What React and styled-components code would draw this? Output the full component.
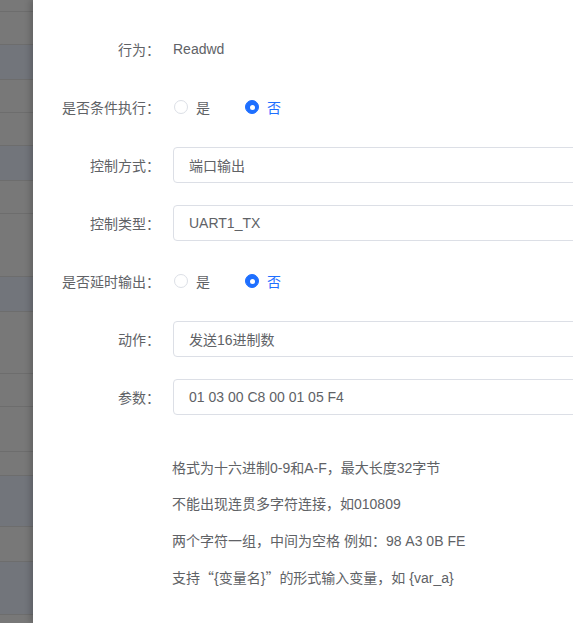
import React from 'react';
import styled, { createGlobalStyle } from 'styled-components';

const GlobalStyle = createGlobalStyle`
    html, body {
        margin: 0;
        padding: 0;
        height: 100%;
        overflow: hidden;
    }
    body {
        font-family: "Liberation Sans", "Noto Sans CJK SC", sans-serif;
        font-size: 14px;
        color: #606266;
    }
`;

const Page = styled.div`
    display: flex;
    height: 100vh;
    overflow: hidden;
`;

const Backdrop = styled.div`
    width: 33px;
    flex-shrink: 0;
    display: flex;
    flex-direction: column;
    background: #7c7c7c;
`;

const BackRow = styled.div`
    height: ${p => p.$h}px;
    box-sizing: border-box;
    flex-shrink: 0;
    background: ${p => (p.$tint ? '#72757b' : '#787878')};
    border-bottom: 1px solid #6d6d6d;
`;

const Drawer = styled.div`
    flex: 1;
    min-width: 0;
    background: #fff;
    box-shadow: -3px 0 6px rgba(0, 0, 0, 0.18);
    padding: 31px 0 0 20px;
    overflow: hidden;
    position: relative;
    z-index: 1;
`;

const Form = styled.div`
    display: flex;
    flex-direction: column;
    gap: 22px;
`;

const Item = styled.div`
    display: flex;
    align-items: center;
    height: 36px;
`;

const Label = styled.label`
    width: 120px;
    flex-shrink: 0;
    box-sizing: border-box;
    padding-right: 13px;
    text-align: right;
    color: #606266;
    font-size: 14px;
`;

const Value = styled.span`
    color: #606266;
`;

const Input = styled.div`
    width: 470px;
    flex-shrink: 0;
    height: 36px;
    box-sizing: border-box;
    border: 1px solid #dcdfe6;
    border-radius: 4px;
    padding: 0 15px;
    display: flex;
    align-items: center;
    color: #606266;
`;

const RadioGroup = styled.div`
    display: flex;
    align-items: center;
`;

const Radio = styled.label`
    display: flex;
    align-items: center;
    margin-right: 34px;
    color: ${p => (p.$checked ? '#1e6fff' : '#606266')};
`;

const Dot = styled.span`
    width: 14px;
    height: 14px;
    box-sizing: border-box;
    border-radius: 50%;
    margin-right: 8px;
    margin-left: 1px;
    border: 1px solid ${p => (p.$checked ? '#1e6fff' : '#dcdfe6')};
    background: ${p => (p.$checked ? '#1e6fff' : '#fff')};
    display: flex;
    align-items: center;
    justify-content: center;
    &::after {
        content: '';
        width: 5px;
        height: 5px;
        border-radius: 50%;
        background: #fff;
        display: ${p => (p.$checked ? 'block' : 'none')};
    }
`;

const Hints = styled.div`
    margin: 35px 0 0 119px;
    font-size: 14px;
    line-height: 36.4px;
    color: #606266;
`;

const Quote = styled.span`
    font-family: "Noto Sans CJK SC", sans-serif;
`;

const backRows = [
    [12, 0], [33, 0], [35, 1], [33, 0], [33, 0], [35, 1], [33, 0], [63, 0], [35, 1],
    [62, 0], [33, 0], [45, 0], [24, 0], [51, 1], [35, 0], [53, 1], [20, 0],
];

const RadioPair = ({ value }) => (
    <RadioGroup>
        <Radio $checked={value}>
            <Dot $checked={value} />是
        </Radio>
        <Radio $checked={!value}>
            <Dot $checked={!value} />否
        </Radio>
    </RadioGroup>
);

const App = () => {
    return (
        <Page>
            <GlobalStyle />
            <Backdrop>
                {backRows.map(([h, tint], i) => (
                    <BackRow key={i} $h={h} $tint={tint} />
                ))}
            </Backdrop>
            <Drawer>
                <Form>
                    <Item>
                        <Label>行为：</Label>
                        <Value>Readwd</Value>
                    </Item>
                    <Item>
                        <Label>是否条件执行：</Label>
                        <RadioPair value={false} />
                    </Item>
                    <Item>
                        <Label>控制方式：</Label>
                        <Input>端口输出</Input>
                    </Item>
                    <Item>
                        <Label>控制类型：</Label>
                        <Input>UART1_TX</Input>
                    </Item>
                    <Item>
                        <Label>是否延时输出：</Label>
                        <RadioPair value={false} />
                    </Item>
                    <Item>
                        <Label>动作：</Label>
                        <Input>发送16进制数</Input>
                    </Item>
                    <Item>
                        <Label>参数：</Label>
                        <Input>01 03 00 C8 00 01 05 F4</Input>
                    </Item>
                </Form>
                <Hints>
                    <div>格式为十六进制0-9和A-F，最大长度32字节</div>
                    <div>不能出现连贯多字符连接，如010809</div>
                    <div>两个字符一组，中间为空格 例如：98 A3 0B FE</div>
                    <div>支持<Quote>“</Quote>{'{'}变量名{'}'}<Quote>”</Quote>的形式输入变量，如 {'{'}var_a{'}'}</div>
                </Hints>
            </Drawer>
        </Page>
    );
};

export default App;
